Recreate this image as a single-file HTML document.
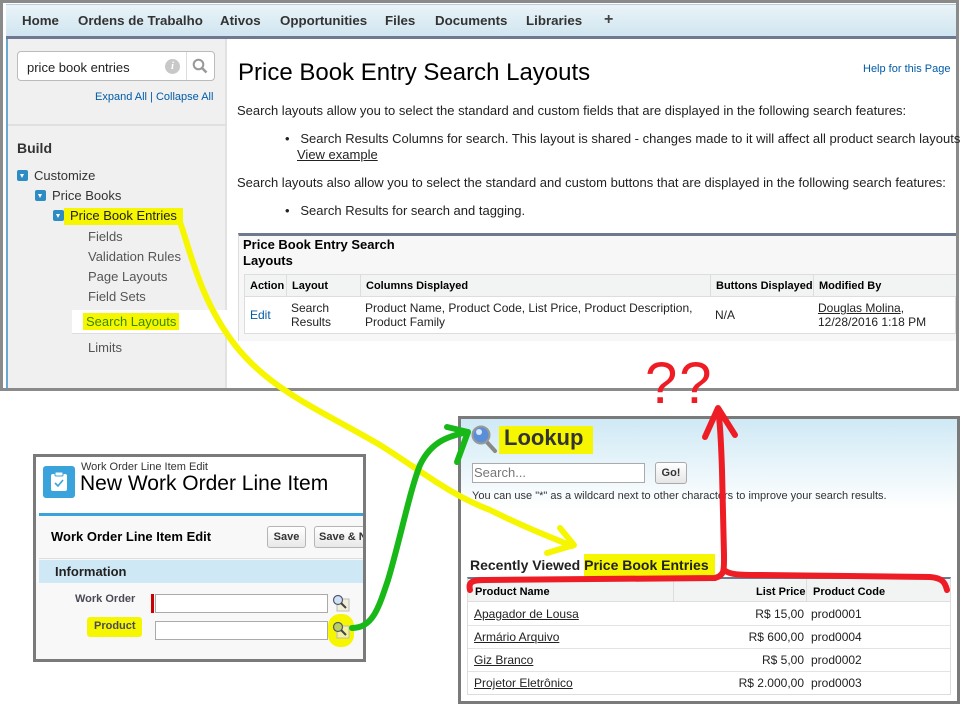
<!DOCTYPE html>
<html><head><meta charset="utf-8"><style>
*{margin:0;padding:0;box-sizing:border-box}
body{width:960px;height:705px;background:#fff;position:relative;overflow:hidden;font-family:"Liberation Sans",Arial,sans-serif;font-size:13px;color:#222}
.a{position:absolute}
.hl{background:#f6f600}
a,.lnk{color:#015ba7;text-decoration:none}
.u{text-decoration:underline;color:#222}
.nv{position:absolute;top:13px;font-size:13.3px;font-weight:bold;color:#333}
.tri{position:absolute;width:11px;height:11px;background:#2e8cc4;border-radius:2px}
.tri:after{content:"";position:absolute;left:3px;top:4px;border-left:2.5px solid transparent;border-right:2.5px solid transparent;border-top:4px solid #fff}
</style></head><body>

<!-- TOP SCREENSHOT -->
<div class="a" style="left:0;top:0;width:959px;height:391px;border:3px solid #8a8a8a;background:#fff"></div>
<div class="a" style="left:6px;top:4px;width:950px;height:33px;background:linear-gradient(#eaf3f8,#cfe5ef);border-top:1px solid #bcd"></div>
<div class="a" style="left:6px;top:36px;width:950px;height:3px;background:#6e7890"></div>
<div class="nv" style="left:22px">Home</div>
<div class="nv" style="left:78px">Ordens de Trabalho</div>
<div class="nv" style="left:220px">Ativos</div>
<div class="nv" style="left:280px">Opportunities</div>
<div class="nv" style="left:385px">Files</div>
<div class="nv" style="left:435px">Documents</div>
<div class="nv" style="left:526px">Libraries</div>
<div class="a" style="left:604px;top:11px;font-size:16px;font-weight:bold;color:#444">+</div>

<!-- sidebar -->
<div class="a" style="left:6px;top:39px;width:221px;height:349px;background:#f0f0f0;border-right:2px solid #e2e2e2"></div>
<div class="a" style="left:6px;top:39px;width:2px;height:349px;background:#6aa8cf"></div>
<div class="a" style="left:8px;top:124px;width:219px;height:2px;background:#e0e0e0"></div>
<div class="a" style="left:17px;top:51px;width:198px;height:30px;background:#fff;border:1px solid #bbb;border-radius:4px"></div>
<div class="a" style="left:27px;top:60px;font-size:13px;color:#222">price book entries</div>
<div class="a" style="left:165px;top:59px;width:15px;height:15px;border-radius:50%;background:#c8c8c8;color:#fff;font-size:11px;font-style:italic;font-weight:bold;text-align:center;line-height:15px;font-family:'Liberation Serif',serif">i</div>
<div class="a" style="left:186px;top:52px;width:1px;height:28px;background:#ddd"></div>
<svg class="a" style="left:192px;top:58px" width="16" height="16"><circle cx="6.5" cy="6.5" r="4.8" fill="none" stroke="#999" stroke-width="2"/><line x1="10" y1="10" x2="14.5" y2="14.5" stroke="#999" stroke-width="2.5"/></svg>
<div class="a lnk" style="left:95px;top:91px;font-size:11px">Expand All | Collapse All</div>
<div class="a" style="left:17px;top:140px;font-size:14px;font-weight:bold;color:#333">Build</div>
<div class="tri" style="left:17px;top:170px"></div>
<div class="a" style="left:34px;top:168px;color:#333">Customize</div>
<div class="tri" style="left:35px;top:190px"></div>
<div class="a" style="left:52px;top:188px;color:#333">Price Books</div>
<div class="tri" style="left:53px;top:210px"></div>
<div class="a hl" style="left:64px;top:208px;padding:0 6px 2px 6px;color:#222">Price Book Entries</div>
<div class="a" style="left:88px;top:229px;color:#555">Fields</div>
<div class="a" style="left:88px;top:249px;color:#555">Validation Rules</div>
<div class="a" style="left:88px;top:269px;color:#555">Page Layouts</div>
<div class="a" style="left:88px;top:289px;color:#555">Field Sets</div>
<div class="a" style="left:72px;top:310px;width:155px;height:24px;background:#fff;border-bottom:1px solid #ddd"></div>
<div class="a hl" style="left:83px;top:313px;padding:1px 3px;color:#3a8a00">Search Layouts</div>
<div class="a" style="left:88px;top:340px;color:#555">Limits</div>

<!-- content -->
<div class="a" style="left:238px;top:59px;font-size:24px;color:#000">Price Book Entry Search Layouts</div>
<div class="a lnk" style="left:863px;top:63px;font-size:11px">Help for this Page</div>
<div class="a" style="left:237px;top:103px">Search layouts allow you to select the standard and custom fields that are displayed in the following search features:</div>
<div class="a" style="left:285px;top:131px;white-space:nowrap">•&nbsp;&nbsp;&nbsp;Search Results Columns for search. This layout is shared - changes made to it will affect all product search layouts</div>
<div class="a u" style="left:297px;top:147px">View example</div>
<div class="a" style="left:237px;top:175px">Search layouts also allow you to select the standard and custom buttons that are displayed in the following search features:</div>
<div class="a" style="left:285px;top:203px">•&nbsp;&nbsp;&nbsp;Search Results for search and tagging.</div>
<div class="a" style="left:238px;top:233px;width:718px;height:108px;background:#f7f7f7;border-top:3px solid #6e7890;border-left:1px solid #ddd"></div>
<div class="a" style="left:243px;top:237px;font-size:13px;font-weight:bold;color:#000;line-height:16px">Price Book Entry Search<br>Layouts</div>
<div class="a" style="left:244px;top:274px;width:712px;height:60px;background:#fff;border:1px solid #ddd"></div>
<div class="a" style="left:245px;top:275px;width:711px;height:22px;background:#f2f3f3;border-bottom:1px solid #ddd"></div>
<div class="a" style="left:286px;top:275px;width:1px;height:22px;background:#ddd"></div>
<div class="a" style="left:360px;top:275px;width:1px;height:22px;background:#ddd"></div>
<div class="a" style="left:710px;top:275px;width:1px;height:22px;background:#ddd"></div>
<div class="a" style="left:813px;top:275px;width:1px;height:22px;background:#ddd"></div>
<div class="a" style="left:250px;top:280px;font-size:11px;font-weight:bold;color:#000">Action</div>
<div class="a" style="left:292px;top:280px;font-size:11px;font-weight:bold;color:#000">Layout</div>
<div class="a" style="left:366px;top:280px;font-size:11px;font-weight:bold;color:#000">Columns Displayed</div>
<div class="a" style="left:716px;top:280px;font-size:11px;font-weight:bold;color:#000">Buttons Displayed</div>
<div class="a" style="left:819px;top:280px;font-size:11px;font-weight:bold;color:#000">Modified By</div>
<div class="a lnk" style="left:250px;top:308px;font-size:12px">Edit</div>
<div class="a" style="left:291px;top:301px;font-size:12px;line-height:14px;color:#222">Search<br>Results</div>
<div class="a" style="left:365px;top:301px;font-size:12px;line-height:14px;color:#222">Product Name, Product Code, List Price, Product Description,<br>Product Family</div>
<div class="a" style="left:715px;top:308px;font-size:12px">N/A</div>
<div class="a" style="left:818px;top:301px;font-size:12px;line-height:14px"><span class="u">Douglas Molina</span>,<br>12/28/2016 1:18 PM</div>

<!-- WORK ORDER SCREENSHOT -->
<div class="a" style="left:33px;top:454px;width:333px;height:208px;border:3px solid #7a7a7a;background:#f8f8f8"></div>
<div class="a" style="left:36px;top:457px;width:327px;height:56px;background:#fff"></div>
<div class="a" style="left:43px;top:466px;width:32px;height:32px;background:#3aa3db;border-radius:3px"></div>
<svg class="a" style="left:49px;top:471px" width="20" height="22"><rect x="2" y="3" width="16" height="17" rx="2" fill="#fff"/><rect x="6" y="1" width="8" height="4" rx="1" fill="#fff" stroke="#3aa3db"/><path d="M6 12l3 3 5-6" stroke="#3aa3db" stroke-width="1.6" fill="none"/></svg>
<div class="a" style="left:81px;top:461px;font-size:11px;color:#333">Work Order Line Item Edit</div>
<div class="a" style="left:80px;top:472px;font-size:21px;color:#000">New Work Order Line Item</div>
<div class="a" style="left:39px;top:513px;width:324px;height:3px;background:#3aa3db"></div>
<div class="a" style="left:39px;top:516px;width:324px;height:43px;background:#f8f8f8;border-bottom:1px solid #ddd"></div>
<div class="a" style="left:51px;top:529px;font-size:13px;font-weight:bold;color:#000">Work Order Line Item Edit</div>
<div class="a" style="left:267px;top:526px;width:39px;height:22px;border:1px solid #b5b5b5;border-radius:3px;background:linear-gradient(#fff,#e8e8e8);font-size:11px;font-weight:bold;color:#333;text-align:center;line-height:20px">Save</div>
<div class="a" style="left:314px;top:526px;width:49px;height:22px;border:1px solid #b5b5b5;border-right:0;border-radius:3px 0 0 3px;background:linear-gradient(#fff,#e8e8e8);font-size:11px;font-weight:bold;color:#333;line-height:20px;padding-left:4px;overflow:hidden;white-space:nowrap">Save &amp; N</div>
<div class="a" style="left:39px;top:560px;width:324px;height:23px;background:#cfe8f5"></div>
<div class="a" style="left:55px;top:564px;font-size:13px;font-weight:bold;color:#222">Information</div>
<div class="a" style="left:75px;top:593px;font-size:11px;font-weight:bold;color:#4a4a56">Work Order</div>
<div class="a" style="left:151px;top:594px;width:3px;height:19px;background:#c00"></div>
<div class="a" style="left:155px;top:594px;width:173px;height:19px;background:#fff;border:1px solid #aaa"></div>
<div class="a" style="left:155px;top:621px;width:173px;height:19px;background:#fff;border:1px solid #aaa"></div>
<div class="a" style="left:87px;top:617px;width:55px;height:20px;background:#f6f600;border-radius:3px"></div>
<div class="a" style="left:94px;top:620px;font-size:11px;font-weight:bold;color:#4a4a56">Product</div>
<svg class="a" style="left:332px;top:594px" width="18" height="18"><rect x="5" y="5" width="12" height="12" fill="#f3f0d8" stroke="#bbb"/><circle cx="6" cy="6" r="4.5" fill="#cfe3f5" stroke="#557" stroke-width="1.2"/><line x1="9" y1="9" x2="14" y2="14" stroke="#444" stroke-width="2"/></svg>
<div class="a" style="left:328px;top:614px;width:26px;height:33px;background:#f6f600;border-radius:12px"></div>
<svg class="a" style="left:332px;top:621px" width="18" height="18"><rect x="5" y="5" width="12" height="12" fill="#f3f0a0" stroke="#bbb"/><circle cx="6" cy="6" r="4.5" fill="#b8d060" stroke="#557" stroke-width="1.2"/><line x1="9" y1="9" x2="14" y2="14" stroke="#444" stroke-width="2"/></svg>

<!-- LOOKUP SCREENSHOT -->
<div class="a" style="left:458px;top:416px;width:502px;height:288px;border:3px solid #7a7a7a;background:linear-gradient(#cfe9f5 0px,#fff 90px)"></div>
<svg class="a" style="left:470px;top:424px" width="28" height="30"><line x1="15" y1="16" x2="25" y2="27" stroke="#888" stroke-width="4" stroke-linecap="round"/><circle cx="11" cy="11" r="8.5" fill="#5a8fd8" stroke="#999" stroke-width="2"/><circle cx="9" cy="8" r="3" fill="#d8e8ff"/></svg>
<div class="a hl" style="left:499px;top:426px;width:94px;height:28px"></div>
<div class="a" style="left:504px;top:425px;font-size:22px;font-weight:bold;color:#333">Lookup</div>
<div class="a" style="left:472px;top:463px;width:173px;height:20px;background:#fff;border:1px solid #aaa"></div>
<div class="a" style="left:474px;top:465px;font-size:13px;color:#777">Search...</div>
<div class="a" style="left:655px;top:462px;width:32px;height:22px;border:1px solid #aaa;border-radius:3px;background:linear-gradient(#fff,#e6e6e6);font-size:11px;font-weight:bold;color:#333;text-align:center;line-height:20px">Go!</div>
<div class="a" style="left:472px;top:490px;font-size:11px;color:#333">You can use "*" as a wildcard next to other characters to improve your search results.</div>
<div class="a hl" style="left:584px;top:554px;width:131px;height:22px"></div>
<div class="a" style="left:470px;top:557px;font-size:14px;font-weight:bold;color:#222">Recently Viewed Price Book Entries</div>
<div class="a" style="left:467px;top:577px;width:484px;height:118px;background:#fff;border:1px solid #ddd;border-top:2px solid #6e7890"></div>
<div class="a" style="left:468px;top:579px;width:482px;height:23px;background:#f2f3f3;border-bottom:1px solid #ddd"></div>
<div class="a" style="left:673px;top:579px;width:1px;height:23px;background:#ddd"></div>
<div class="a" style="left:806px;top:579px;width:1px;height:23px;background:#ddd"></div>
<div class="a" style="left:475px;top:586px;font-size:11px;font-weight:bold;color:#000">Product Name</div>
<div class="a" style="left:756px;top:586px;font-size:11px;font-weight:bold;color:#000">List Price</div>
<div class="a" style="left:813px;top:586px;font-size:11px;font-weight:bold;color:#000">Product Code</div>
<div class="a" style="left:468px;top:625px;width:482px;height:1px;background:#e3e3e3"></div>
<div class="a" style="left:468px;top:648px;width:482px;height:1px;background:#e3e3e3"></div>
<div class="a" style="left:468px;top:671px;width:482px;height:1px;background:#e3e3e3"></div>
<div class="a u" style="left:474px;top:607px;font-size:12px">Apagador de Lousa</div>
<div class="a u" style="left:474px;top:630px;font-size:12px">Armário Arquivo</div>
<div class="a u" style="left:474px;top:653px;font-size:12px">Giz Branco</div>
<div class="a u" style="left:474px;top:676px;font-size:12px">Projetor Eletrônico</div>
<div class="a" style="left:660px;top:607px;width:144px;text-align:right;font-size:12px">R$ 15,00</div>
<div class="a" style="left:660px;top:630px;width:144px;text-align:right;font-size:12px">R$ 600,00</div>
<div class="a" style="left:660px;top:653px;width:144px;text-align:right;font-size:12px">R$ 5,00</div>
<div class="a" style="left:660px;top:676px;width:144px;text-align:right;font-size:12px">R$ 2.000,00</div>
<div class="a" style="left:811px;top:607px;font-size:12px">prod0001</div>
<div class="a" style="left:811px;top:630px;font-size:12px">prod0004</div>
<div class="a" style="left:811px;top:653px;font-size:12px">prod0002</div>
<div class="a" style="left:811px;top:676px;font-size:12px">prod0003</div>

<!-- ANNOTATIONS -->
<div class="a" style="left:645px;top:350px;font-size:58px;color:#ee1c24;font-family:'Liberation Sans',sans-serif;letter-spacing:2px">??</div>
<svg class="a" style="left:0;top:0" width="960" height="705" fill="none" stroke-linecap="round" stroke-linejoin="round">
<path d="M180 222 C190 250 200 300 235 345 C270 390 320 410 380 445 C420 470 450 495 490 510 C520 525 545 535 572 546" stroke="#f6f600" stroke-width="6"/>
<path d="M560 528 L574 545 L547 553" stroke="#f6f600" stroke-width="6"/>
<path d="M352 628 C372 628 378 610 388 580 C400 540 410 490 420 465 C432 440 450 436 468 432" stroke="#18b818" stroke-width="6"/>
<path d="M447 427 L468 432 L457 462" stroke="#18b818" stroke-width="6"/>
<path d="M470 590 C468 582 472 580 485 580 L715 578 C725 575 724 570 724 555 L722 470 C721 440 720 420 718 410" stroke="#ee1c24" stroke-width="6"/>
<path d="M705 437 L718 408 L735 435" stroke="#ee1c24" stroke-width="6"/>
<path d="M724 570 C730 575 740 575 760 575 L930 577 C942 578 945 582 947 590" stroke="#ee1c24" stroke-width="6"/>
</svg>
</body></html>
